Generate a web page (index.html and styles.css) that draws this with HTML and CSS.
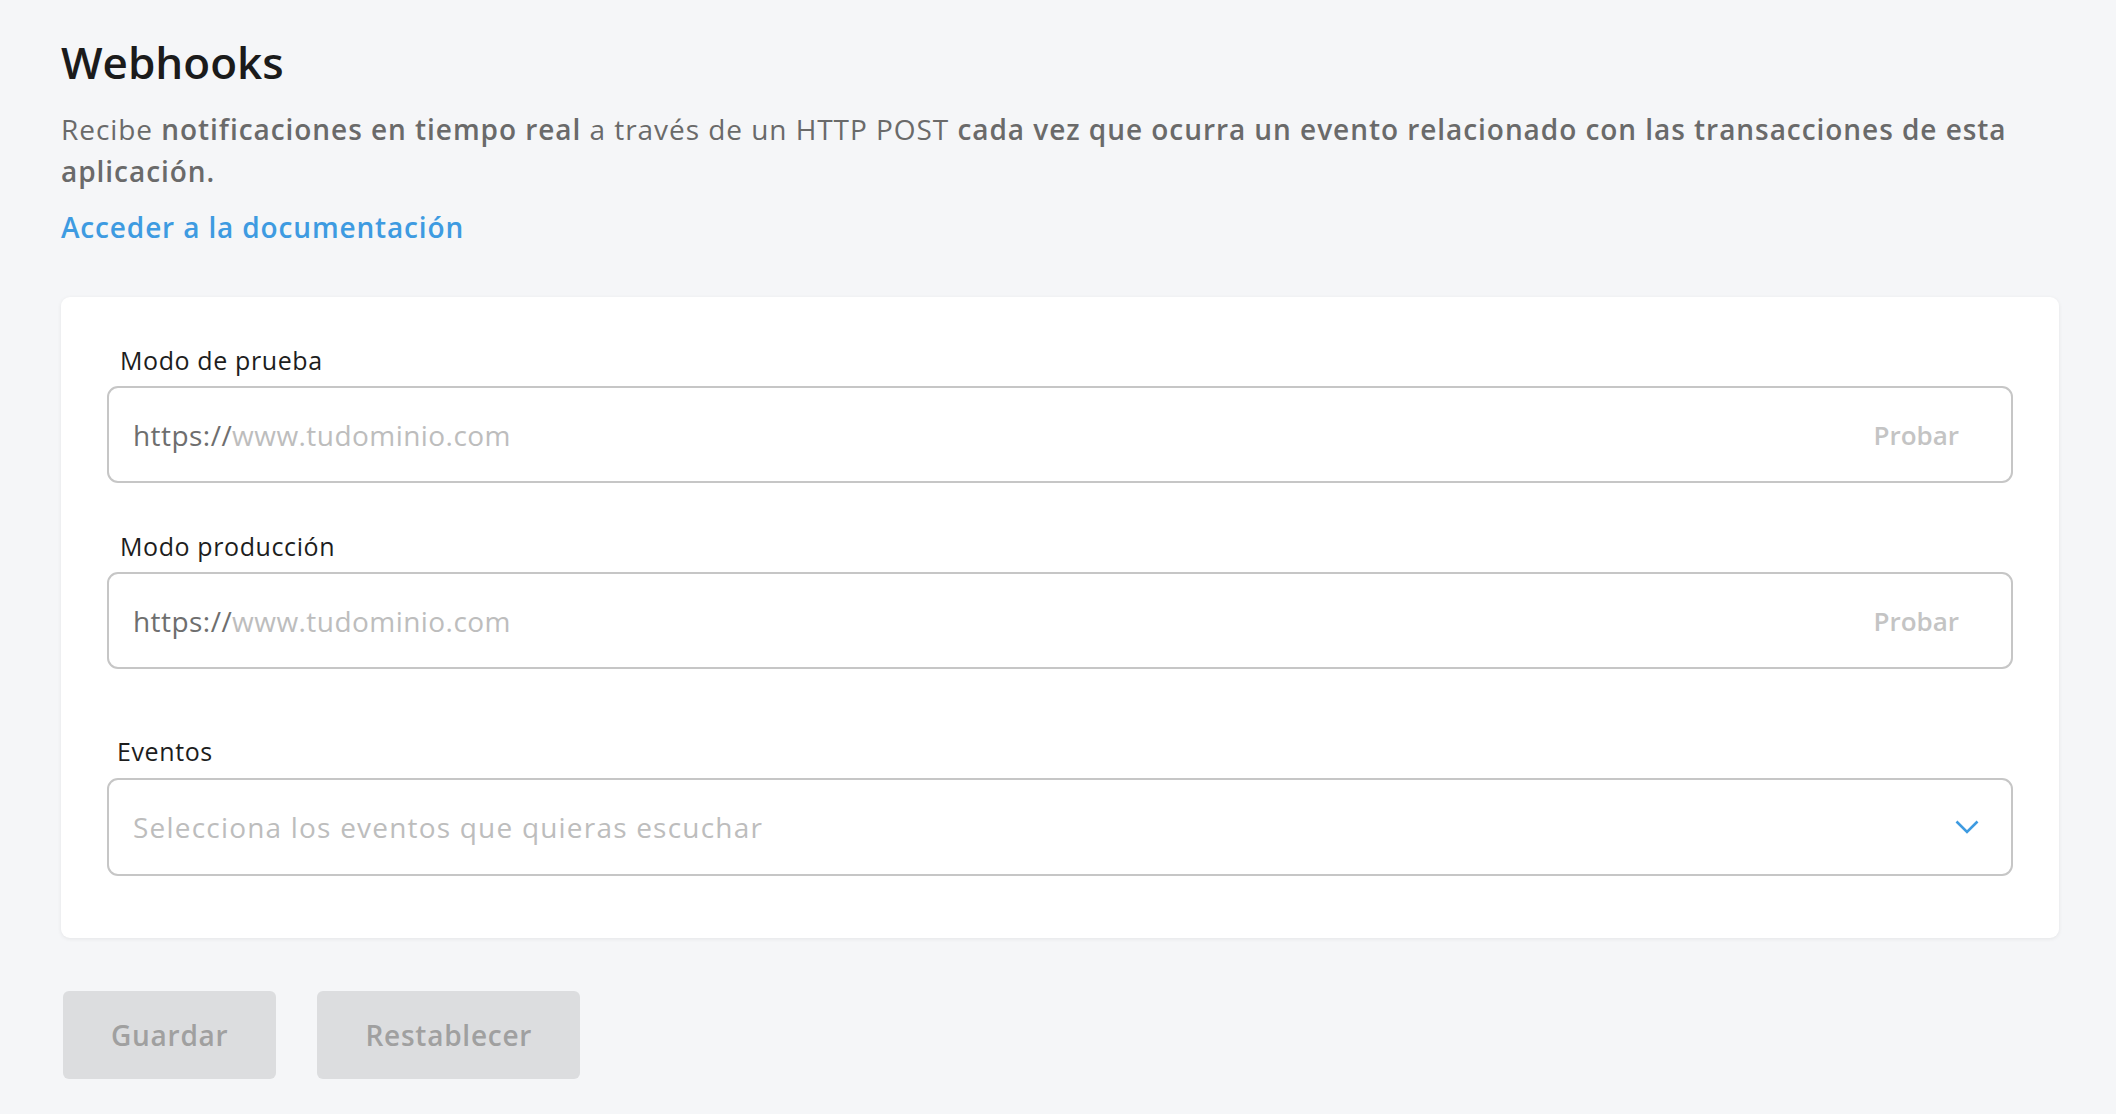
FILE: index.html
```html
<!DOCTYPE html>
<html lang="es">
<head>
<meta charset="utf-8">
<title>Webhooks</title>
<link rel="stylesheet" href="styles.css">
</head>
<body>
<main class="page">
  <h1 class="title">Webhooks</h1>
  <p class="desc">Recibe <b>notificaciones en tiempo real</b> a través de un HTTP POST <b>cada vez que ocurra un evento relacionado con las transacciones de esta</b> <b>aplicación.</b></p>
  <a class="doc-link" href="#">Acceder a la documentación</a>

  <section class="card">
    <div class="field">
      <label class="label">Modo de prueba</label>
      <div class="input">
        <span class="input-text"><span class="proto">https://</span><span class="ph">www.tudominio.com</span></span>
        <span class="probar">Probar</span>
      </div>
    </div>
    <div class="field field-second">
      <label class="label">Modo producción</label>
      <div class="input">
        <span class="input-text"><span class="proto">https://</span><span class="ph">www.tudominio.com</span></span>
        <span class="probar">Probar</span>
      </div>
    </div>
    <div class="field field-events">
      <label class="label label-events">Eventos</label>
      <div class="input select">
        <span class="input-text select-text">Selecciona los eventos que quieras escuchar</span>
        <svg class="chevron" width="24" height="14" viewBox="0 0 24 14"><polyline points="1.5,1.5 12,12 22.5,1.5" fill="none" stroke="#3e9be1" stroke-width="2.6"/></svg>
      </div>
    </div>
  </section>

  <div class="actions">
    <button class="btn">Guardar</button>
    <button class="btn">Restablecer</button>
  </div>
</main>
</body>
</html>
```
FILE: styles.css
```css
* { box-sizing: border-box; }
html, body { margin: 0; padding: 0; }
body {
  background: #f5f6f8;
  font-family: "Open Sans", "Lato", sans-serif;
  color: #1a1a1a;
  min-height: 1114px;
}
.page {
  padding: 36px 57px 0 61px;
  display: flex;
  flex-direction: column;
  align-items: flex-start;
}
.title {
  margin: 0;
  font-size: 44px;
  line-height: 52px;
  font-weight: 600;
  color: #1b1b1b;
}
.desc {
  margin: 20px 0 0 0;
  font-size: 28px;
  line-height: 42px;
  letter-spacing: 0.95px;
  color: #6a6a6a;
  font-weight: 400;
}
.desc b { font-weight: 600; }
.doc-link {
  margin-top: 14px;
  font-size: 28px;
  line-height: 42px;
  letter-spacing: 0.85px;
  font-weight: 600;
  color: #3e9be1;
  text-decoration: none;
}
.card {
  align-self: stretch;
  margin-top: 49px;
  background: #ffffff;
  border-radius: 9px;
  box-shadow: 0 1px 4px rgba(0,0,0,0.07);
  padding: 48px 46px 62px 46px;
  display: flex;
  flex-direction: column;
}
.field { display: flex; flex-direction: column; }
.field-second { margin-top: 48px; }
.field-events { margin-top: 67px; }
.label {
  font-size: 25px;
  line-height: 30px;
  letter-spacing: 0.6px;
  color: #1d1d1d;
  padding-left: 13px;
  margin-bottom: 11px;
}
.label-events { padding-left: 10px; margin-bottom: 12px; }
.input {
  height: 97px;
  border: 2px solid #c6c6c6;
  border-radius: 11px;
  display: flex;
  align-items: center;
  justify-content: space-between;
  padding: 0 52px 0 24px;
}
.select { height: 98px; padding-right: 32px; }
.input-text {
  font-size: 28px;
  letter-spacing: 0.45px;
  color: #bdbdbd;
}
.select-text { letter-spacing: 1.2px; color: #bdbdbd; }
.proto { color: #6e6e6e; }
.ph { color: #bdbdbd; }
.probar {
  font-size: 26px;
  font-weight: 600;
  color: #c4c4c4;
}
.chevron { display: block; }
.actions {
  margin-top: 53px;
  margin-left: 2px;
  display: flex;
  gap: 41px;
}
.btn {
  height: 88px;
  padding: 0 48px;
  border: none;
  border-radius: 6px;
  background: #dcdddf;
  color: #a0a0a0;
  font-family: "Open Sans", "Lato", sans-serif;
  font-size: 28px;
  letter-spacing: 0.75px;
  font-weight: 600;
}
```
